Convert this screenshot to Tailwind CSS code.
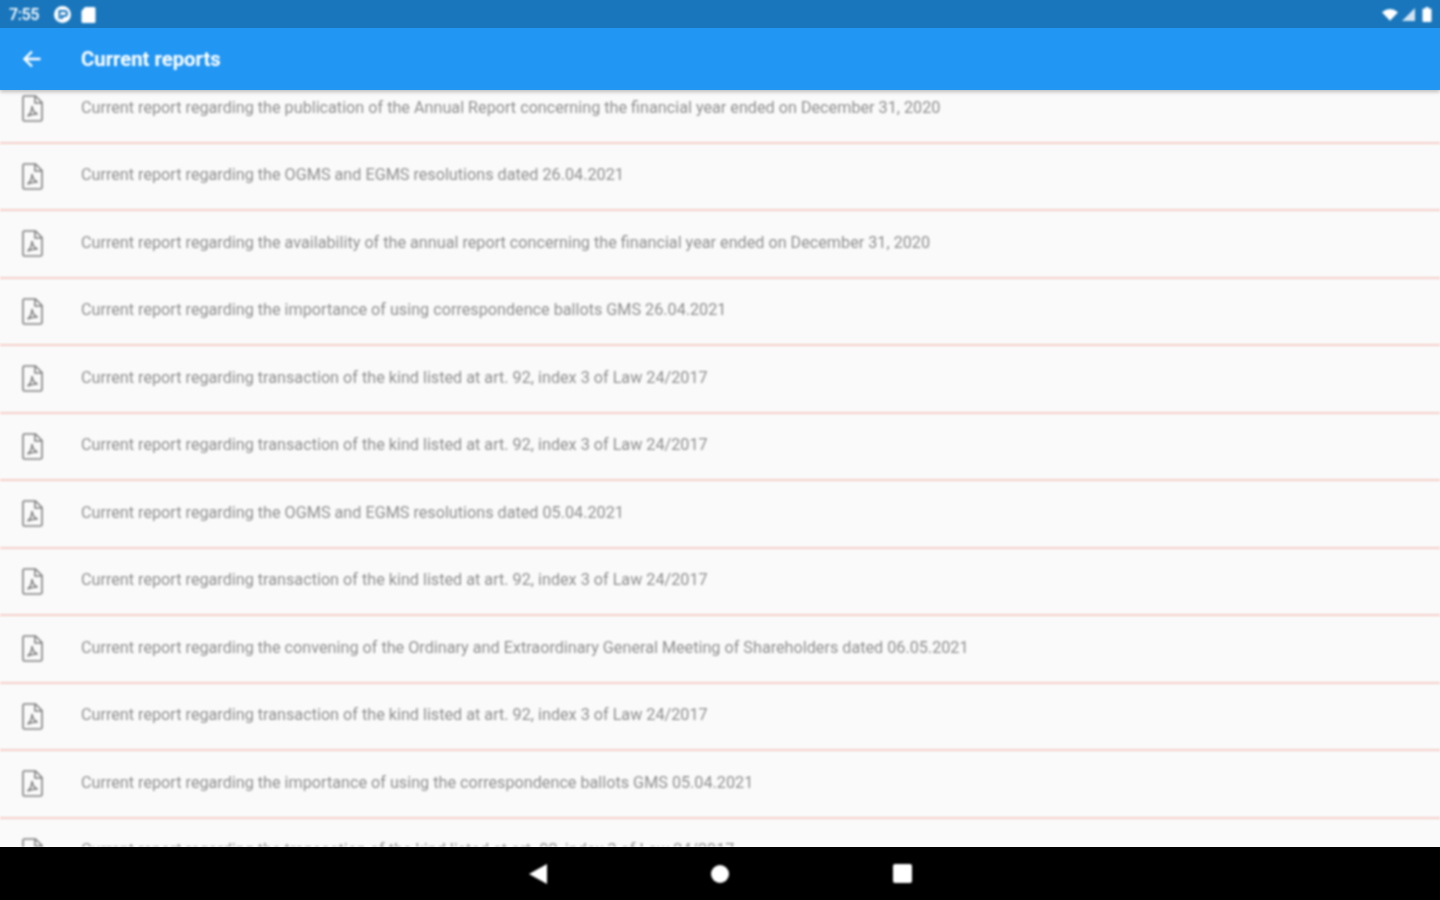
<!doctype html>
<html><head><meta charset="utf-8"><title>Current reports</title>
<script src="https://cdn.jsdelivr.net/npm/@tailwindcss/browser@4"></script></head>
<body class="bg-[#fafafa]">
<div class="w-[1440px] h-[900px] flex flex-col overflow-hidden font-['Roboto',sans-serif] bg-[#fafafa]">
  <div class="relative z-20 h-[28px] shrink-0 bg-[#1976bc] flex items-center pl-[9px] pr-[8px] text-white">
    <span class="mt-[2px] text-[16px] font-medium tracking-[-0.4px] [filter:blur(0.8px)] w-[32px]">7:55</span>
    <svg class="ml-[12px] [filter:blur(0.8px)]" width="19" height="19" viewBox="0 0 19 19"><circle cx="9.5" cy="9.5" r="8.5" fill="#fff"/><path d="M6.500 14V6h5a2.500 2.500 0 0 1 0 5H9v3" fill="none" stroke="#1976bc" stroke-width="2"/></svg>
    <svg class="ml-[9px] [filter:blur(0.8px)]" width="15" height="17" viewBox="0 0 15 17"><path d="M4 1h9a1.500 1.500 0 0 1 1.500 1.500v13A1.500 1.500 0 0 1 13 17H2a1.500 1.500 0 0 1-1.500-1.500V5z" fill="#fff"/></svg>
    <div class="ml-auto flex items-center [filter:blur(0.8px)]">
      <svg width="16" height="13" viewBox="0 0 18 14"><path d="M0 4.500Q9-3 18 4.500L9 14z" fill="#fff"/></svg>
      <svg class="ml-[3px]" width="14" height="14" viewBox="0 0 14 14"><path d="M14 1v13H1z" fill="#fff" fill-opacity=".8"/></svg>
      <svg class="ml-[7px]" width="10" height="15" viewBox="0 0 9 15"><path d="M3 0h3v1.500h2a1 1 0 0 1 1 1V14a1 1 0 0 1-1 1H1a1 1 0 0 1-1-1V2.500a1 1 0 0 1 1-1h2z" fill="#fff"/></svg>
    </div>
  </div>
  <header class="relative z-10 h-[62px] shrink-0 bg-[#2196f3] shadow-[0_2px_4px_rgba(0,0,0,0.25)] flex items-center text-white">
    <svg class="ml-[22px] [filter:blur(0.8px)]" width="20" height="20" viewBox="0 0 20 20"><path d="M18.500 10H3M10 2.500 2.500 10l7.500 7.500" fill="none" stroke="#fff" stroke-width="2.400"/></svg>
    <h1 class="ml-[39px] mt-[1px] text-[20.300px] font-bold [filter:blur(0.8px)]">Current reports</h1>
  </header>
  <main class="flex-1 min-h-0 overflow-hidden -mt-[14px] text-[#8f8f8f] text-[16.190px] [filter:blur(0.8px)]">
    <div class="h-[67.5px] border-b-2 border-[#f6cfca] flex items-center pl-[22px] box-border"><svg class="shrink-0" width="21" height="27" viewBox="0 0 21 27"><path d="M2.500 1h11l6.500 6.500v16.500a2 2 0 0 1-2 2H2.500a1.500 1.500 0 0 1-1.500-1.500V2.500A1.500 1.500 0 0 1 2.500 1ZM13 1v7h7M5.500 21c3-2 4.500-6 4.500-10 .5 4 2.500 7 5.500 8-3.500 0-7 .5-10 2Z" fill="none" stroke="#828282" stroke-width="1.600"/></svg><span class="ml-[38px] -mt-[2px]">Current report regarding the publication of the Annual Report concerning the financial year ended on December 31, 2020</span></div>
    <div class="h-[67.5px] border-b-2 border-[#f6cfca] flex items-center pl-[22px] box-border"><svg class="shrink-0" width="21" height="27" viewBox="0 0 21 27"><path d="M2.500 1h11l6.500 6.500v16.500a2 2 0 0 1-2 2H2.500a1.500 1.500 0 0 1-1.500-1.500V2.500A1.500 1.500 0 0 1 2.500 1ZM13 1v7h7M5.500 21c3-2 4.500-6 4.500-10 .5 4 2.500 7 5.500 8-3.500 0-7 .5-10 2Z" fill="none" stroke="#828282" stroke-width="1.600"/></svg><span class="ml-[38px] -mt-[2px]">Current report regarding the OGMS and EGMS resolutions dated 26.04.2021</span></div>
    <div class="h-[67.5px] border-b-2 border-[#f6cfca] flex items-center pl-[22px] box-border"><svg class="shrink-0" width="21" height="27" viewBox="0 0 21 27"><path d="M2.500 1h11l6.500 6.500v16.500a2 2 0 0 1-2 2H2.500a1.500 1.500 0 0 1-1.500-1.500V2.500A1.500 1.500 0 0 1 2.500 1ZM13 1v7h7M5.500 21c3-2 4.500-6 4.500-10 .5 4 2.500 7 5.500 8-3.500 0-7 .5-10 2Z" fill="none" stroke="#828282" stroke-width="1.600"/></svg><span class="ml-[38px] -mt-[2px]">Current report regarding the availability of the annual report concerning the financial year ended on December 31, 2020</span></div>
    <div class="h-[67.5px] border-b-2 border-[#f6cfca] flex items-center pl-[22px] box-border"><svg class="shrink-0" width="21" height="27" viewBox="0 0 21 27"><path d="M2.500 1h11l6.500 6.500v16.500a2 2 0 0 1-2 2H2.500a1.500 1.500 0 0 1-1.500-1.500V2.500A1.500 1.500 0 0 1 2.500 1ZM13 1v7h7M5.500 21c3-2 4.500-6 4.500-10 .5 4 2.500 7 5.500 8-3.500 0-7 .5-10 2Z" fill="none" stroke="#828282" stroke-width="1.600"/></svg><span class="ml-[38px] -mt-[2px]">Current report regarding the importance of using correspondence ballots GMS 26.04.2021</span></div>
    <div class="h-[67.5px] border-b-2 border-[#f6cfca] flex items-center pl-[22px] box-border"><svg class="shrink-0" width="21" height="27" viewBox="0 0 21 27"><path d="M2.500 1h11l6.500 6.500v16.500a2 2 0 0 1-2 2H2.500a1.500 1.500 0 0 1-1.500-1.500V2.500A1.500 1.500 0 0 1 2.500 1ZM13 1v7h7M5.500 21c3-2 4.500-6 4.500-10 .5 4 2.500 7 5.500 8-3.500 0-7 .5-10 2Z" fill="none" stroke="#828282" stroke-width="1.600"/></svg><span class="ml-[38px] -mt-[2px]">Current report regarding transaction of the kind listed at art. 92, index 3 of Law 24/2017</span></div>
    <div class="h-[67.5px] border-b-2 border-[#f6cfca] flex items-center pl-[22px] box-border"><svg class="shrink-0" width="21" height="27" viewBox="0 0 21 27"><path d="M2.500 1h11l6.500 6.500v16.500a2 2 0 0 1-2 2H2.500a1.500 1.500 0 0 1-1.500-1.500V2.500A1.500 1.500 0 0 1 2.500 1ZM13 1v7h7M5.500 21c3-2 4.500-6 4.500-10 .5 4 2.500 7 5.500 8-3.500 0-7 .5-10 2Z" fill="none" stroke="#828282" stroke-width="1.600"/></svg><span class="ml-[38px] -mt-[2px]">Current report regarding transaction of the kind listed at art. 92, index 3 of Law 24/2017</span></div>
    <div class="h-[67.5px] border-b-2 border-[#f6cfca] flex items-center pl-[22px] box-border"><svg class="shrink-0" width="21" height="27" viewBox="0 0 21 27"><path d="M2.500 1h11l6.500 6.500v16.500a2 2 0 0 1-2 2H2.500a1.500 1.500 0 0 1-1.500-1.500V2.500A1.500 1.500 0 0 1 2.500 1ZM13 1v7h7M5.500 21c3-2 4.500-6 4.500-10 .5 4 2.500 7 5.500 8-3.500 0-7 .5-10 2Z" fill="none" stroke="#828282" stroke-width="1.600"/></svg><span class="ml-[38px] -mt-[2px]">Current report regarding the OGMS and EGMS resolutions dated 05.04.2021</span></div>
    <div class="h-[67.5px] border-b-2 border-[#f6cfca] flex items-center pl-[22px] box-border"><svg class="shrink-0" width="21" height="27" viewBox="0 0 21 27"><path d="M2.500 1h11l6.500 6.500v16.500a2 2 0 0 1-2 2H2.500a1.500 1.500 0 0 1-1.500-1.500V2.500A1.500 1.500 0 0 1 2.500 1ZM13 1v7h7M5.500 21c3-2 4.500-6 4.500-10 .5 4 2.500 7 5.500 8-3.500 0-7 .5-10 2Z" fill="none" stroke="#828282" stroke-width="1.600"/></svg><span class="ml-[38px] -mt-[2px]">Current report regarding transaction of the kind listed at art. 92, index 3 of Law 24/2017</span></div>
    <div class="h-[67.5px] border-b-2 border-[#f6cfca] flex items-center pl-[22px] box-border"><svg class="shrink-0" width="21" height="27" viewBox="0 0 21 27"><path d="M2.500 1h11l6.500 6.500v16.500a2 2 0 0 1-2 2H2.500a1.500 1.500 0 0 1-1.500-1.500V2.500A1.500 1.500 0 0 1 2.500 1ZM13 1v7h7M5.500 21c3-2 4.500-6 4.500-10 .5 4 2.500 7 5.500 8-3.500 0-7 .5-10 2Z" fill="none" stroke="#828282" stroke-width="1.600"/></svg><span class="ml-[38px] -mt-[2px]">Current report regarding the convening of the Ordinary and Extraordinary General Meeting of Shareholders dated 06.05.2021</span></div>
    <div class="h-[67.5px] border-b-2 border-[#f6cfca] flex items-center pl-[22px] box-border"><svg class="shrink-0" width="21" height="27" viewBox="0 0 21 27"><path d="M2.500 1h11l6.500 6.500v16.500a2 2 0 0 1-2 2H2.500a1.500 1.500 0 0 1-1.500-1.500V2.500A1.500 1.500 0 0 1 2.500 1ZM13 1v7h7M5.500 21c3-2 4.500-6 4.500-10 .5 4 2.500 7 5.500 8-3.500 0-7 .5-10 2Z" fill="none" stroke="#828282" stroke-width="1.600"/></svg><span class="ml-[38px] -mt-[2px]">Current report regarding transaction of the kind listed at art. 92, index 3 of Law 24/2017</span></div>
    <div class="h-[67.5px] border-b-2 border-[#f6cfca] flex items-center pl-[22px] box-border"><svg class="shrink-0" width="21" height="27" viewBox="0 0 21 27"><path d="M2.500 1h11l6.500 6.500v16.500a2 2 0 0 1-2 2H2.500a1.500 1.500 0 0 1-1.500-1.500V2.500A1.500 1.500 0 0 1 2.500 1ZM13 1v7h7M5.500 21c3-2 4.500-6 4.500-10 .5 4 2.500 7 5.500 8-3.500 0-7 .5-10 2Z" fill="none" stroke="#828282" stroke-width="1.600"/></svg><span class="ml-[38px] -mt-[2px]">Current report regarding the importance of using the correspondence ballots GMS 05.04.2021</span></div>
    <div class="h-[67.5px] border-b-2 border-[#f6cfca] flex items-center pl-[22px] box-border"><svg class="shrink-0" width="21" height="27" viewBox="0 0 21 27"><path d="M2.500 1h11l6.500 6.500v16.500a2 2 0 0 1-2 2H2.500a1.500 1.500 0 0 1-1.500-1.500V2.500A1.500 1.500 0 0 1 2.500 1ZM13 1v7h7M5.500 21c3-2 4.500-6 4.500-10 .5 4 2.500 7 5.500 8-3.500 0-7 .5-10 2Z" fill="none" stroke="#828282" stroke-width="1.600"/></svg><span class="ml-[38px] -mt-[2px]">Current report regarding the transaction of the kind listed at art. 92, index 3 of Law 24/2017</span></div>
  </main>
  <nav class="relative z-10 h-[53px] shrink-0 bg-black flex items-center justify-center gap-[164px]">
    <svg class="[filter:blur(0.8px)]" width="18" height="20" viewBox="0 0 18 20"><path d="M18 0v20L0 10z" fill="#fff"/></svg>
    <span class="w-[18px] h-[18px] rounded-full bg-white [filter:blur(0.8px)]"></span>
    <span class="w-[19px] h-[19px] rounded-[2px] bg-white [filter:blur(0.8px)]"></span>
  </nav>
</div>
</body></html>
